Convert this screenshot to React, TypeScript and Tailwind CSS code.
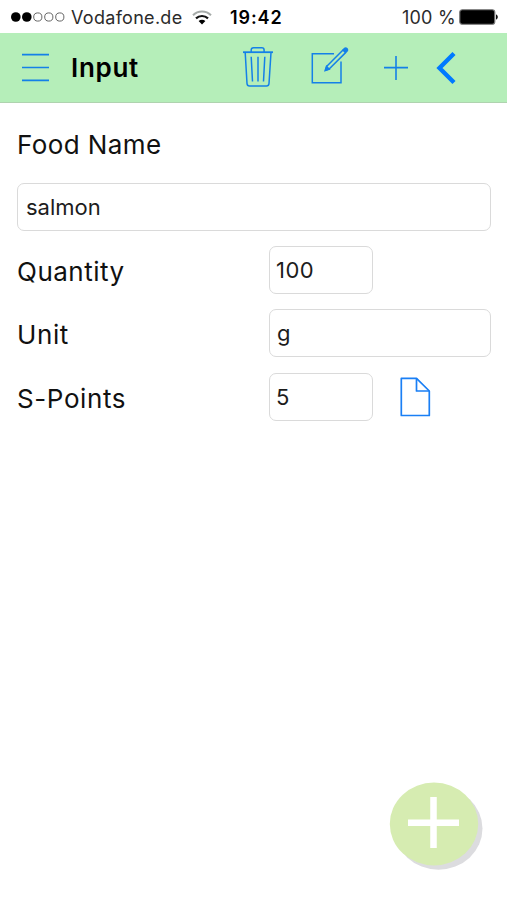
import { useState } from "react";

interface FieldProps {
  value: string;
  onChange: (value: string) => void;
  className: string;
  label: string;
}

function Field({ value, onChange, className, label }: FieldProps) {
  return (
    <input
      type="text"
      aria-label={label}
      value={value}
      onChange={(e) => onChange(e.target.value)}
      className={`h-12 rounded-[7px] border border-[#dadada] bg-white text-[22px] text-[#1c1c1c] outline-none ${className}`}
    />
  );
}

function StatusBar() {
  return (
    <div className="flex h-[33px] shrink-0 items-center bg-white pl-[11px] pt-[1px] text-[18px] text-[#2b2b2b]">
      <svg width="55" height="12" viewBox="0 0 55 12">
        <circle cx="4.8" cy="6" r="4.8" fill="#000" />
        <circle cx="15.8" cy="6" r="4.8" fill="#000" />
        <circle cx="26.8" cy="6" r="4.1" fill="none" stroke="#666" />
        <circle cx="37.8" cy="6" r="4.1" fill="none" stroke="#666" />
        <circle cx="48.8" cy="6" r="4.1" fill="none" stroke="#666" />
      </svg>
      <span className="ml-[5px] w-[121px] whitespace-nowrap tracking-[0.3px]">Vodafone.de</span>
      <svg width="20" height="15" viewBox="0 0 20 15" fill="none">
        <path d="M1 5.2C6 0.3 14 0.3 19 5.2" stroke="#a5aaa8" strokeWidth="2" />
        <path d="M4 8.4C7.4 5.2 12.6 5.2 16 8.4" stroke="#111" strokeWidth="2.2" />
        <path d="M6.6 11C8.6 9.2 11.4 9.2 13.4 11L10 14.4Z" fill="#000" />
      </svg>
      <span className="ml-[18px] w-[172px] font-semibold tracking-[0.9px] text-black">19:42</span>
      <span className="w-[57px] whitespace-nowrap tracking-[0.2px]">100 %</span>
      <svg width="40" height="16" viewBox="0 0 40 16">
        <rect x="0.75" y="0.75" width="35" height="14.5" rx="2.5" fill="#000" stroke="#777" strokeWidth="1.2" />
        <path d="M37 5.5C39.4 6 39.4 10 37 10.5Z" fill="#111" />
      </svg>
    </div>
  );
}

function Header() {
  return (
    <header className="flex h-[70px] shrink-0 items-center border-b border-[#afd3af] bg-[#b5eeb9] pl-[22px] text-[#1480e8]">
      <svg width="27" height="30" viewBox="0 0 27 30" stroke="currentColor" strokeWidth="1.7">
        <path d="M0 1.7H27M0 14.5H27M0 27.3H27" />
      </svg>
      <h1 className="ml-[22px] w-[172px] text-[26px] font-semibold tracking-[0.7px] text-black">Input</h1>
      {/* trash */}
      <svg width="30" height="42" viewBox="0 0 30 42" fill="none" stroke="currentColor" strokeWidth="1.5">
        <path d="M0 5.2H30" strokeWidth="1.8" />
        <path d="M8.2 5V3Q8.2 0.8 10.5 0.8H18.8Q21.1 0.8 21.1 3V5" />
        <path d="M2.2 5.5L4 36.5Q4.2 39 6.5 39H23.5Q25.8 39 26 36.5L28 5.5" />
        <path d="M8.2 9.8L9.5 34.5M15 9.8V34.5M21.8 9.8L20.5 34.5" />
      </svg>
      {/* compose */}
      <svg className="ml-[38px]" width="38" height="42" viewBox="0 0 38 42" fill="none" stroke="currentColor" strokeWidth="1.5">
        <path d="M23 6.8H1.3V35.7H30V14.5" />
        <path d="M14.5 23.2L15.8 19.2L32 3L34.6 5.6L18.4 21.8Z" strokeLinejoin="round" />
        <path d="M14.2 23.6L15.5 19.5L18.2 22.1Z" fill="currentColor" />
        <path d="M32.3 2.7L33.6 1.4Q34.8 0.5 35.9 1.6Q37 2.8 36.1 4L34.8 5.2Z" fill="currentColor" />
      </svg>
      <svg className="ml-[35px]" width="24" height="24" viewBox="0 0 24 24" stroke="currentColor" strokeWidth="1.6">
        <path d="M0 11.6H24M12 0V24" />
      </svg>
      <svg className="ml-7 text-[#007aff]" width="20" height="34" viewBox="0 0 20 34" fill="none" stroke="currentColor" strokeWidth="4.4">
        <path d="M18 2.5L3.5 17L18 31.5" />
      </svg>
    </header>
  );
}

export default function App() {
  const [name, setName] = useState("salmon");
  const [quantity, setQuantity] = useState("100");
  const [unit, setUnit] = useState("g");
  const [points, setPoints] = useState("5");

  return (
    <div className="relative flex h-[900px] w-[507px] flex-col overflow-hidden bg-white font-['Inter',sans-serif]">
      <StatusBar />
      <Header />

      <main className="flex flex-col pl-[17px] pr-4 text-[26px] text-[#111]">
        <div className="mt-[21px] flex h-10 items-center tracking-[0.4px]">Food Name</div>
        <Field label="Food Name" value={name} onChange={setName} className="mt-[19px] w-full px-2" />

        <div className="mt-[15px] grid grid-cols-[252px_1fr] items-center gap-y-[15.4px]">
          <span className="pt-[3px] tracking-[0.5px]">Quantity</span>
          <Field label="Quantity" value={quantity} onChange={setQuantity} className="w-[104px] px-[6px] tracking-[0.5px]" />

          <span className="pt-[3px] tracking-[0.6px]">Unit</span>
          <Field label="Unit" value={unit} onChange={setUnit} className="w-full px-[7px]" />

          <span className="pt-[3px] tracking-[0.6px]">S-Points</span>
          <div className="flex items-center">
            <Field label="S-Points" value={points} onChange={setPoints} className="w-[104px] px-[6px]" />
            <svg className="ml-[27px]" width="31" height="40" viewBox="0 0 31 40" fill="none" stroke="#1a7ff5" strokeWidth="1.7" strokeLinejoin="round">
              <path d="M1.3 1.3H16.5L29.3 14V38.5H1.3Z" />
              <path d="M16.5 1.3V14H29.3" />
            </svg>
          </div>
        </div>
      </main>

      {/* floating add button */}
      <button aria-label="Add" className="absolute left-[389px] top-[782px] h-[90px] w-[96px]">
        <svg width="96" height="90" viewBox="0 0 96 90">
          <ellipse cx="49.5" cy="46.5" rx="44" ry="41.2" fill="#dcdcdf" />
          <ellipse cx="45" cy="42" rx="44.2" ry="41.5" fill="#d6ecb1" />
          <path d="M19 40.7H70M44.5 15V66" stroke="#fff" strokeWidth="6.5" />
        </svg>
      </button>
    </div>
  );
}
